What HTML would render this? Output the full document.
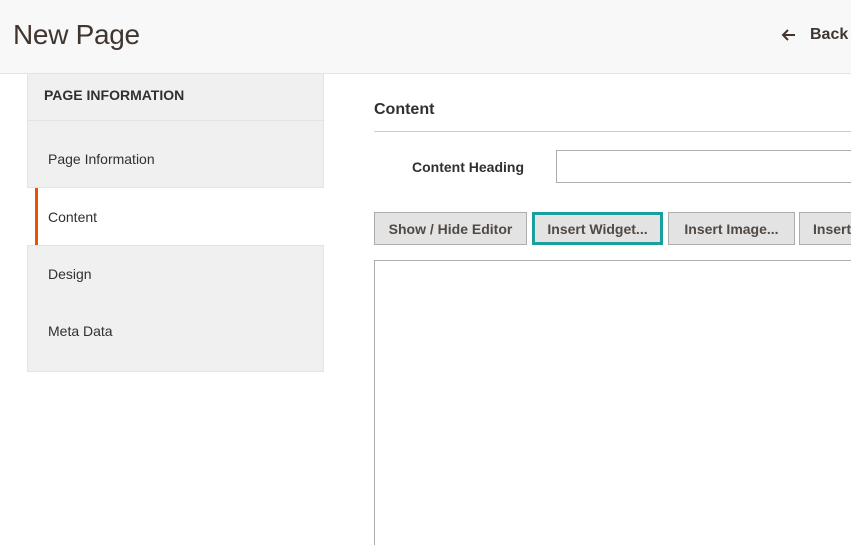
<!DOCTYPE html>
<html><head><style>
*{box-sizing:border-box;margin:0;padding:0}
html,body{width:851px;height:545px;overflow:hidden}
body{background:#fff;font-family:"Liberation Sans",sans-serif;color:#303030;position:relative}
.hdr{position:absolute;left:0;top:0;width:851px;height:74px;background:#f8f8f8;border-bottom:1px solid #e3e3e3}
.hdr h1{position:absolute;left:13px;top:19px;font-size:28px;font-weight:normal;color:#41362f;letter-spacing:-0.3px}
.back{position:absolute;left:810px;top:26px;font-size:16px;font-weight:bold;color:#41362f}
.side{position:absolute;left:27px;top:74px;width:297px}
.blk{position:absolute;left:0;width:297px;background:#f0f0f0;border:1px solid #e3e3e3;border-top:none}
.blk span{position:absolute;left:20px;font-size:14px;color:#303030}
.act{position:absolute;left:8px;width:289px;background:#fff;border-left:3px solid #eb5202}
.btn{position:absolute;top:212px;height:33px;background:#e3e3e3;border:1px solid #adadad;font-size:14px;font-weight:bold;color:#514943;text-align:center;line-height:32px;white-space:nowrap;overflow:hidden}
</style></head><body>
<div class="hdr"><h1>New Page</h1>
<svg style="position:absolute;left:781px;top:28px" width="16" height="14" viewBox="0 0 16 14"><path d="M14 7H2M7 2L2 7l5 5" fill="none" stroke="#41362f" stroke-width="2"/></svg>
<div class="back">Back</div></div>
<div class="side">
<div class="blk" style="top:0;height:47px"><span style="left:16px;top:13px;font-weight:bold;font-size:14px">PAGE INFORMATION</span></div>
<div class="blk" style="top:47px;height:67px"><span style="top:30px">Page Information</span></div>
<div class="act" style="top:114px;height:57px"><span style="position:absolute;left:10px;top:21px;font-size:14px">Content</span></div>
<div class="blk" style="top:171px;height:127px;border-top:1px solid #e3e3e3"><span style="top:20px">Design</span><span style="top:77px">Meta Data</span></div>
</div>
<div style="position:absolute;left:374px;top:101px;font-size:16px;font-weight:bold;color:#303030">Content</div>
<div style="position:absolute;left:374px;top:131px;width:477px;height:1px;background:#ccc"></div>
<div style="position:absolute;left:412px;top:159px;font-size:14px;font-weight:bold;color:#303030">Content Heading</div>
<div style="position:absolute;left:556px;top:150px;width:300px;height:33px;border:1px solid #adadad;background:#fff"></div>
<div class="btn" style="left:374px;width:153px">Show / Hide Editor</div>
<div class="btn" style="left:532px;width:131px;border:3px solid #1a9e9e;line-height:28px">Insert Widget...</div>
<div class="btn" style="left:668px;width:127px">Insert Image...</div>
<div class="btn" style="left:799px;width:80px;text-align:left;padding-left:13px">Insert Variable...</div>
<div style="position:absolute;left:374px;top:260px;width:490px;height:300px;border:1px solid #adadad"></div>
</body></html>
